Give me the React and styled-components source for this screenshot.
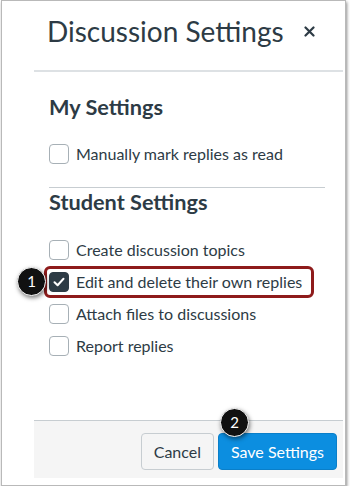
import React from "react";
import styled, { createGlobalStyle } from "styled-components";

const GlobalStyle = createGlobalStyle`
    html, body {
        margin: 0;
        padding: 0;
        background: #ffffff;
    }
    body {
        font-family: Lato, "Open Sans", "Liberation Sans", sans-serif;
        color: #2d3b45;
    }
    * {
        box-sizing: border-box;
    }
`;

const Frame = styled.div`
    margin-left: 1px;
    width: 345px;
    height: 486px;
    border: 1px solid #b9b9b9;
    box-shadow: 1px 2px 3px rgba(0, 0, 0, 0.45);
    background: #ffffff;
    padding: 0 2px 7px 32px;
    display: flex;
`;

const Tray = styled.div`
    flex: 1;
    display: flex;
    flex-direction: column;
`;

const Header = styled.header`
    height: 71px;
    display: flex;
    justify-content: space-between;
    align-items: flex-start;
    padding: 11.9px 28px 0 13px;
    border-bottom: 2px solid #dde1e4;
`;

const Title = styled.h1`
    margin: 0;
    font-size: 28px;
    line-height: 36px;
    font-weight: 400;
`;

const CloseButton = styled.button`
    margin-top: 13px;
    width: 11px;
    height: 11px;
    padding: 0;
    border: none;
    background: none;
    display: flex;
    color: #2d3b45;
`;

const Body = styled.div`
    flex: 1;
    padding: 0 18px 0 15px;
`;

const Section = styled.section`
    padding-top: ${props => props.top}px;
    padding-bottom: ${props => props.bottom}px;
    border-bottom: ${props => (props.divided ? "1px solid #c7cdd1" : "none")};
`;

const Heading = styled.h2`
    margin: 0 0 ${props => props.gap}px;
    font-size: 21.7px;
    line-height: 26px;
    font-weight: 700;
`;

const Row = styled.label`
    position: relative;
    height: ${props => props.h}px;
    display: flex;
    align-items: center;
    gap: 7px;
    font-size: 16px;
    line-height: 20px;
    white-space: nowrap;
`;

const Box = styled.span`
    width: 20px;
    height: 20px;
    flex: none;
    border-radius: 4px;
    border: 1px solid ${props => (props.checked ? "#2d3b45" : "#a7b0b6")};
    background: ${props => (props.checked ? "#2d3b45" : "#ffffff")};
    display: flex;
    align-items: center;
    justify-content: center;
`;

const Highlight = styled.span`
    position: absolute;
    left: -5px;
    top: 0;
    width: 270px;
    height: 32px;
    border: 3px solid #8e1b1b;
    border-radius: 6px;
    pointer-events: none;
`;

const Callout = styled.span`
    position: absolute;
    left: ${props => props.x}px;
    top: ${props => props.y}px;
    width: 29px;
    height: 29px;
    border-radius: 50%;
    background: #111111;
    border: 1.5px solid #ffffff;
    box-shadow: 1px 2px 4px rgba(0, 0, 0, 0.5);
    color: #ffffff;
    font-size: 15px;
    line-height: 26px;
    text-align: center;
    font-weight: 400;
`;

const Footer = styled.footer`
    height: 58px;
    border-top: 1px solid #c7cdd1;
    background: #f5f5f5;
    display: flex;
    justify-content: flex-end;
    align-items: flex-start;
    gap: 4px;
    padding: 12px 6px 0 0;
`;

const Button = styled.button`
    position: relative;
    height: 37px;
    padding: 0 ${props => props.pad}px;
    border-radius: 4px;
    font-family: Lato, "Open Sans", "Liberation Sans", sans-serif;
    font-size: 16px;
    border: 1px solid ${props => (props.primary ? "#0a7fc9" : "#c7cdd1")};
    background: ${props => (props.primary ? "#0c8ee0" : "#f5f5f5")};
    color: ${props => (props.primary ? "#ffffff" : "#2d3b45")};
`;

const Check = () => (
    <svg width="12" height="10" viewBox="0 0 12 10">
        <path d="M1.5 5.2 L4.6 8.2 L10.5 1.8" fill="none" stroke="#ffffff" strokeWidth="2" strokeLinecap="round" strokeLinejoin="round" />
    </svg>
);

const Option = ({ label, checked, h = 32, children }) => (
    <Row h={h}>
        <Box checked={checked}>{checked && <Check />}</Box>
        {label}
        {children}
    </Row>
);

const App = () => (
    <>
        <GlobalStyle />
        <Frame>
            <Tray>
                <Header>
                    <Title>Discussion Settings</Title>
                    <CloseButton aria-label="Close">
                        <svg width="11" height="11" viewBox="0 0 11 11">
                            <path d="M1.5 1.5 L9.5 9.5 M9.5 1.5 L1.5 9.5" stroke="#2d3b45" strokeWidth="2.2" strokeLinecap="round" />
                        </svg>
                    </CloseButton>
                </Header>
                <Body>
                    <Section top={21.6} bottom={17} divided>
                        <Heading gap={18.4}>My Settings</Heading>
                        <Option label="Manually mark replies as read" />
                    </Section>
                    <Section top={1.3}>
                        <Heading gap={19.2}>Student Settings</Heading>
                        <Option label="Create discussion topics" />
                        <Option label="Edit and delete their own replies" checked>
                            <Highlight />
                            <Callout x={-32} y={1}>1</Callout>
                        </Option>
                        <Option label="Attach files to discussions" />
                        <Option label="Report replies" />
                    </Section>
                </Body>
                <Footer>
                    <Button pad={12}>Cancel</Button>
                    <Button primary pad={12}>
                        Save Settings
                        <Callout x={1} y={-26}>2</Callout>
                    </Button>
                </Footer>
            </Tray>
        </Frame>
    </>
);

export default App;
